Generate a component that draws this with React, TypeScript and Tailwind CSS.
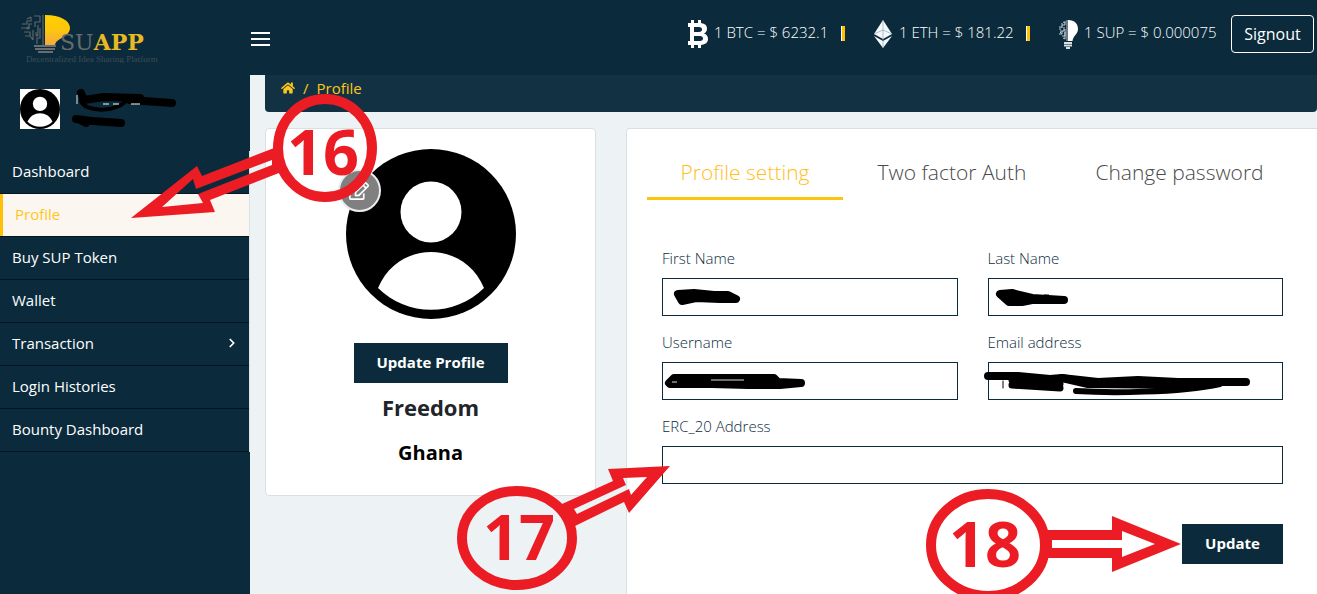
import React from 'react';
import { FaHome, FaRegEdit } from 'react-icons/fa';
import { ChevronRight } from 'lucide-react';

const menuItems = [
  { label: 'Dashboard' },
  { label: 'Profile', active: true },
  { label: 'Buy SUP Token' },
  { label: 'Wallet' },
  { label: 'Transaction', hasChildren: true },
  { label: 'Login Histories' },
  { label: 'Bounty Dashboard' },
];

const Logo: React.FC = () => (
  <svg width="140" height="50" viewBox="0 0 140 50" role="img" aria-label="PSUAPP">
    <defs>
      <linearGradient id="bulb" x1="0" y1="0" x2="0" y2="1">
        <stop offset="0" stopColor="#ffd000" />
        <stop offset="0.5" stopColor="#fdc60c" />
        <stop offset="1" stopColor="#f6a843" />
      </linearGradient>
    </defs>
    <path d="M25 2C41 2 50 8 50 15C50 24 36 25 35 32H25Z" fill="url(#bulb)" />
    <g fill="none" stroke="#5d6468" strokeWidth="1.2">
      <path d="M23 2V32M20 3V9H15V14M11 4V8H7V11H2M1 15H9V11H12M4 19H10V23H5M13 17V27M10 23L13 27M18 12V20H15M20 15V25H17V31M7 6L11 4M14 3H20" />
      <circle cx="8" cy="15" r="1" />
      <circle cx="17" cy="22" r="1" />
    </g>
    <path d="M14 33H36M15 36H35M18 39H33" stroke="#686d70" strokeWidth="2" />
    <text x="40" y="37" fontSize="22" fontFamily="'DejaVu Serif', serif" fill="#666b6e">
      SU<tspan fill="#e8b923" fontWeight="700">APP</tspan>
    </text>
    <text x="6" y="49" fontSize="9" fontFamily="'Liberation Serif', serif" fill="#3c4c55">
      Decentralized Idea Sharing Platform
    </text>
  </svg>
);

const BitcoinIcon: React.FC = () => (
  <svg width="20" height="28" viewBox="0 0 20 28" aria-hidden="true">
    <path
      d="M3 0H6V3H10V0H13V3C17 3.500 19 5.500 19 8.500C19 11 18 12.500 16 13.500C18.500 14.500 20 16 20 19C20 22.500 17.500 24.500 13 25V28H10V25H6V28H3V25H0V21H2V7H0V3H3ZM6 7V12H11C15 12 15 7 11 7ZM6 16V21H12C16 21 16 16 12 16Z"
      fill="#fff"
      fillRule="evenodd"
    />
  </svg>
);

const EthereumIcon: React.FC = () => (
  <svg width="20" height="28" viewBox="0 0 20 28" aria-hidden="true">
    <path d="M10 0L19 14L10 19L1 14Z" fill="#f4fafc" />
    <path d="M1 16L10 21L19 16L10 28Z" fill="#f4fafc" />
    <path d="M10 0V28M1 14L10 10L19 14" fill="none" stroke="#8fa3ae" strokeWidth="0.7" />
  </svg>
);

const SupIcon: React.FC = () => (
  <svg width="20" height="30" viewBox="0 0 20 30" aria-hidden="true">
    <path d="M10 1C17 1 20 5 20 10C20 15 15 17 14.500 22H10Z" fill="#fff" />
    <path
      d="M9 1V22M7 2V6H4V9M1 8H4M2 12H6V8M1 15H4V12M4 17H7V13M7 10V20M5 19L7 20M3 5H5M1 10H3M2 13L4 15M5 3L7 4"
      fill="none"
      stroke="#c3cdd2"
      strokeWidth="1"
    />
    <path d="M6 24H14M6 26.500H14M8 29H12" stroke="#d9dfe2" strokeWidth="2" />
  </svg>
);

const Avatar: React.FC<{ className: string }> = ({ className }) => (
  <svg viewBox="0 0 170 170" className={className} role="img" aria-label="User avatar">
    <rect width="170" height="170" fill="#fff" />
    <circle cx="85" cy="85" r="85" />
    <circle cx="85" cy="63" r="30.500" fill="#fff" />
    <path d="M32 139C52 91 118 91 138 139C109 168 61 168 32 139Z" fill="#fff" />
  </svg>
);

interface TickerProps {
  icon: React.ReactNode;
  className: string;
  children: React.ReactNode;
}

const Ticker: React.FC<TickerProps> = ({ icon, className, children }) => (
  <div className={`flex items-center gap-1.5 whitespace-nowrap ${className}`}>
    {icon}
    <span className="pb-0.5">{children}</span>
  </div>
);

const Divider = () => <div className="w-1 h-[15px] mr-7 bg-[#ffc107] border-l border-white" />;

interface FieldProps {
  id: string;
  label: string;
  className?: string;
  children?: React.ReactNode;
}

const Field: React.FC<FieldProps> = ({ id, label, className = '', children }) => (
  <div className={className}>
    <label htmlFor={id} className="block text-[15px] leading-6 font-light text-[#0b2b3c] mb-2">
      {label}
    </label>
    <div className="relative">
      <input
        id={id}
        type="text"
        className="block w-full h-[38px] border border-[#0b2b3c] bg-white px-3 text-sm text-black"
      />
      {children && (
        <svg
          className="absolute top-0 left-0 w-full h-full overflow-visible pointer-events-none"
          aria-hidden="true"
        >
          {children}
        </svg>
      )}
    </div>
  </div>
);

// Numbered steps of the walkthrough, drawn over the page
const Steps: React.FC = () => (
  <svg className="absolute inset-0 w-full h-full pointer-events-none" fill="#ec1c24">
    <g fill="none" stroke="#ec1c24" strokeWidth="10">
      <ellipse cx="325" cy="148" rx="47" ry="49" />
      <ellipse cx="517" cy="538" rx="55" ry="47" />
      <ellipse cx="988" cy="545" rx="57" ry="51" />
    </g>
    <g fillRule="evenodd">
      <path d="M274 148L202 176L197 166L131 218L215 212L210 200L284 171ZM272 160L196 189L193 179L162 207L203 203L198 194L272 165Z" />
      <path d="M562 504L613 481L608 469L670 466L629 513L624 502L575 526ZM574 509L626 485L623 478L647 477L631 495L629 489L577 514Z" />
      <path d="M1044 530H1112V516L1181 544L1112 572V558H1044ZM1052 540H1122V531L1155 544L1122 557V548H1052Z" />
    </g>
    <g fontFamily="'Open Sans', 'Noto Sans', sans-serif" fontWeight="700" fontSize="63">
      <text x="287" y="175">16</text>
      <text x="483" y="560">17</text>
      <text x="949" y="567">18</text>
    </g>
  </svg>
);

const App: React.FC = () => {
  return (
    <div className="relative min-h-screen flex flex-col overflow-hidden bg-[#edf2f5] font-['Open_Sans','Noto_Sans',sans-serif] text-[15px]">
      <header className="h-[75px] shrink-0 flex items-center justify-between bg-[#0b2b3c] text-white pl-5 pr-[3px]">
        <div className="flex items-center">
          <a href="#" className="w-[231px]">
            <Logo />
          </a>
          <button type="button" aria-label="Toggle menu" className="flex flex-col gap-1 pt-0.5">
            <span className="w-[19px] h-0.5 bg-white" />
            <span className="w-[19px] h-0.5 bg-white" />
            <span className="w-[19px] h-0.5 bg-white" />
          </button>
        </div>
        <div className="flex items-center pb-2 text-[15px] font-light">
          <Ticker icon={<BitcoinIcon />} className="w-[153px]">
            1 BTC = $ 6232.1
          </Ticker>
          <Divider />
          <Ticker icon={<EthereumIcon />} className="w-[153px]">
            1 ETH = $ 181.22
          </Ticker>
          <Divider />
          <Ticker icon={<SupIcon />} className="w-[173px]">
            1 SUP = $ 0.000075
          </Ticker>
          <button
            type="button"
            className="w-[83px] h-[38px] border border-white rounded text-[16px] font-normal"
          >
            Signout
          </button>
        </div>
      </header>

      <div className="flex flex-1">
        <aside className="w-[250px] shrink-0 bg-[#0b2b3c] text-white">
          <div className="relative h-[76px] pl-5 pt-3.5">
            <Avatar className="w-10 h-10" />
            <svg className="absolute top-3 left-[70px]" width="110" height="42" aria-hidden="true">
              <g fill="none" stroke="#000" strokeLinecap="round" strokeLinejoin="round">
                <path d="M11 6L14 13L34 10L70 11" strokeWidth="8" />
                <path d="M60 13L102 16" strokeWidth="8" />
                <path d="M11 14C15 26 50 26 58 11" strokeWidth="4" />
                <path d="M6 32L22 34L51 36" strokeWidth="8" />
                <path d="M12 34L16 36" strokeWidth="8" />
              </g>
              <path d="M7 8V17" stroke="#dfe6ea" strokeWidth="1" />
              <path d="M33 17H39M43 17H49M61 17H70" stroke="#fff" strokeWidth="1" />
            </svg>
          </div>
          <nav>
            <ul className="border-r border-[#dee2e6]">
              {menuItems.map((item) => (
                <li key={item.label} className="border-b border-[#031520]">
                  <a
                    href="#"
                    className={`h-[42px] flex items-center justify-between pb-0.5 pr-2.5 ${
                      item.active
                        ? 'bg-[#fcf6f0] text-[#ffc61a] border-l-3 border-[#ffc107] pl-3'
                        : 'pl-3'
                    }`}
                  >
                    {item.label}
                    {item.hasChildren && <ChevronRight size={14} strokeWidth={3} />}
                  </a>
                </li>
              ))}
            </ul>
          </nav>
        </aside>

        <main className="flex-1 min-w-0 pl-[15px] flex flex-col">
          <nav
            aria-label="Breadcrumb"
            className="bg-[#123243] text-[#ffc61a] rounded-b pt-px pb-3 px-4 flex items-center gap-2 leading-6"
          >
            <a href="#" aria-label="Home">
              <FaHome size={14} />
            </a>
            <span>/</span>
            <span>Profile</span>
          </nav>

          <div className="mt-4 flex-1 flex items-start gap-[30px]">
            <section className="w-[331px] shrink-0 h-[368px] bg-white border border-[#dcdfe2] rounded flex flex-col items-center pt-5">
              <div className="relative">
                <Avatar className="w-[170px] h-[170px]" />
                <button
                  type="button"
                  aria-label="Change picture"
                  className="absolute top-5 -left-2 w-[43px] h-[43px] rounded-full bg-[#808080] border-2 border-[#e9edf0] text-white flex items-center justify-center"
                >
                  <FaRegEdit size={20} />
                </button>
              </div>
              <button
                type="button"
                className="mt-6 w-[154px] h-10 pb-0.5 bg-[#0b2b3c] text-white text-[15px] font-bold"
              >
                Update Profile
              </button>
              <h2 className="mt-2 text-[22px] leading-8 font-bold text-[#212529]">Freedom</h2>
              <h3 className="mt-4 text-[20px] leading-7 font-bold text-black">Ghana</h3>
            </section>

            <section className="flex-1 min-w-0 self-stretch bg-white border border-r-0 border-b-0 border-[#dcdfe2] rounded-tl pl-5">
              <div
                role="tablist"
                className="mt-[21px] grid grid-cols-[196px_218px_237px] text-[21px] font-light text-[#4a4a4a]"
              >
                <button
                  type="button"
                  role="tab"
                  aria-selected="true"
                  className="h-[50px] pb-0.5 border-b-3 border-[#fdc50b] text-[#ffbe1a]"
                >
                  Profile setting
                </button>
                <button type="button" role="tab" aria-selected="false" className="h-[50px] pb-1">
                  Two factor Auth
                </button>
                <button type="button" role="tab" aria-selected="false" className="h-[50px] pb-1">
                  Change password
                </button>
              </div>

              <form className="mt-[46px] pl-[15px] pr-[34px]" onSubmit={(e) => e.preventDefault()}>
                <div className="grid grid-cols-2 gap-x-[30px] gap-y-3.5">
                  <Field id="first-name" label="First Name">
                    <path
                      d="M16 16L32 15L52 17L66 17L74 21L58 21L34 20L20 23Z"
                      stroke="#000"
                      strokeWidth="8"
                      strokeLinejoin="round"
                    />
                  </Field>
                  <Field id="last-name" label="Last Name">
                    <path
                      d="M12 16L24 15L44 20L76 22L44 22L34 24L21 24Z"
                      stroke="#000"
                      strokeWidth="8"
                      strokeLinejoin="round"
                    />
                    <path d="M56 17H61" stroke="#000" strokeWidth="1" />
                  </Field>
                  <Field id="username" label="Username">
                    <path
                      d="M7 21L12 16L112 16L116 20L139 21L118 23L86 23L50 22L8 22Z"
                      stroke="#000"
                      strokeWidth="8"
                      strokeLinejoin="round"
                    />
                    <path d="M10 20H15M49 18H82" stroke="#ddd" strokeWidth="1" />
                  </Field>
                  <Field id="email" label="Email address">
                    <g fill="none" stroke="#000" strokeLinecap="round" strokeLinejoin="round">
                      <path d="M0 14L30 14L62 17L74 16L110 20L150 18L190 20L258 20" strokeWidth="8" />
                      <path d="M24 23L72 26M24 18L72 22" strokeWidth="7" />
                      <path d="M88 29C120 31 190 31 232 22" strokeWidth="6" />
                      <path d="M74 16L100 22L200 23" strokeWidth="8" />
                      <path d="M15 19V26" strokeWidth="1" />
                    </g>
                  </Field>
                  <Field id="erc20" label="ERC_20 Address" className="col-span-2" />
                </div>
                <div className="mt-10 flex justify-end">
                  <button
                    type="submit"
                    className="w-[101px] h-10 pb-0.5 bg-[#0b2b3c] text-white text-[15px] font-bold"
                  >
                    Update
                  </button>
                </div>
              </form>
            </section>
          </div>
        </main>
      </div>

      <Steps />
    </div>
  );
};

export default App;
